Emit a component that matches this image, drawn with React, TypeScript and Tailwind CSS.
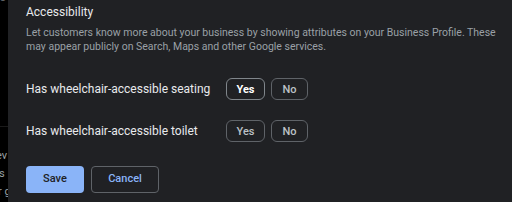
import React from "react";

const Choice = ({ label, active, width }: { label: string; active?: boolean; width: string }) => (
  <button
    type="button"
    className={`${
      active ? "text-white font-bold border-[#80868b]" : "text-[#bdc1c6] font-medium border-[#5f6368]"
    } ${width} h-[22px] rounded-[6px] border text-[11px] leading-none`}
  >
    {label}
  </button>
);

const AttributeRow = ({ label, yesActive }: { label: string; yesActive?: boolean }) => (
  <div className="flex items-center h-[22px]">
    <span className="w-[200px] text-[12px] text-[#e8eaed] whitespace-nowrap">{label}</span>
    <div className="flex gap-[6px]">
      <Choice label="Yes" active={yesActive} width="w-[39px]" />
      <Choice label="No" width="w-[37px]" />
    </div>
  </div>
);

export default function App() {
  return (
    <div
      className="flex w-[512px] h-[202px] overflow-hidden bg-black"
      style={{ fontFamily: "Roboto, 'Liberation Sans', sans-serif" }}
    >
      <div className="w-[8px] shrink-0 overflow-hidden flex flex-col text-[11px] leading-[14px] text-[#9aa0a6] whitespace-nowrap">
        <span className="-mt-[9px] -ml-[6px] text-[#5f6368]">us</span>
        <div className="mt-[121px] border-t border-[#1a1a1a]" />
        <span className="mt-[22px] -ml-[4px]">ev</span>
        <span className="mt-[4px] -ml-[1px]">s</span>
        <span className="mt-[4px] -ml-[2px]">r g</span>
      </div>
      <div className="flex-1 bg-[#202124] pl-[18px] pr-[8px] pt-[4px]">
        <h2 className="text-[12px] leading-[16px] text-[#e8eaed]">Accessibility</h2>
        <p className="mt-[6px] text-[10.5px] leading-[14px] text-[#9aa0a6]">
          Let customers know more about your business by showing attributes on your Business Profile. These
          may appear publicly on Search, Maps and other Google services.
        </p>
        <div className="mt-[24px] flex flex-col gap-[20px]">
          <AttributeRow label="Has wheelchair-accessible seating" yesActive />
          <AttributeRow label="Has wheelchair-accessible toilet" />
        </div>
        <div className="mt-[24px] flex gap-[7px]">
          <button
            type="button"
            className="w-[58px] h-[27px] rounded-[4px] bg-[#8ab4f8] text-[#202124] text-[11px] font-medium"
          >
            Save
          </button>
          <button
            type="button"
            className="w-[68px] h-[27px] rounded-[4px] border border-[#5f6368] text-[#8ab4f8] text-[11px] font-medium"
          >
            Cancel
          </button>
        </div>
      </div>
    </div>
  );
}
